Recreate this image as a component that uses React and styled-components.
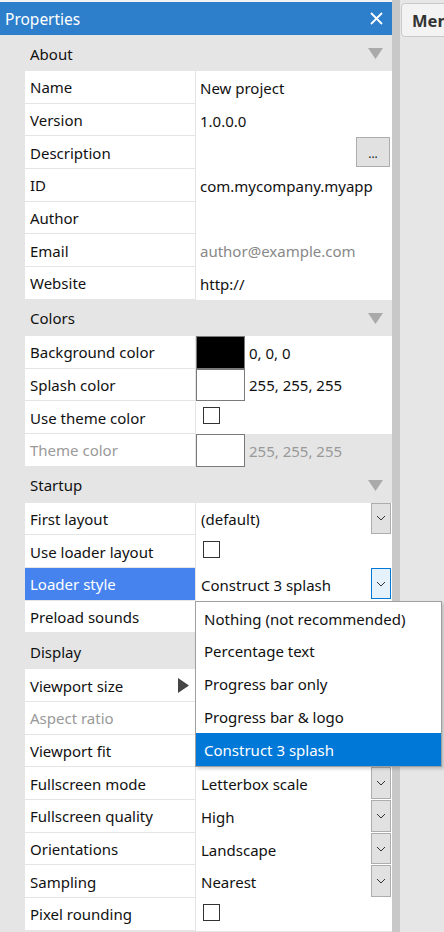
import React from "react";
import styled, { createGlobalStyle } from "styled-components";

const Global = createGlobalStyle`
  html, body { margin: 0; padding: 0; background: #e6e6e6; }
  body { font-family: "Noto Sans", "Open Sans", sans-serif; }
  * { box-sizing: border-box; }
`;

const Page = styled.div`
  display: flex;
  width: 444px;
  height: 932px;
  overflow: hidden;
  background: #e6e6e6;
`;

const Panel = styled.div`
  width: 392px;
  flex: none;
  display: flex;
  flex-direction: column;
  background: #e5e5e5;
  padding-top: 2px;
  position: relative;
`;

const TopStrip = styled.div`
  position: absolute;
  top: 0; left: 0; right: 0; height: 2px;
  background: #f3f3f3;
`;

const TitleBar = styled.div`
  height: 33px;
  background: #2d7fcc;
  color: #fff;
  display: flex;
  align-items: center;
  justify-content: space-between;
  padding: 0 9px 0 5px;
  font-size: 15.5px;
`;

const Track = styled.div`
  width: 8px;
  flex: none;
  background: #c8c8c8;
`;

const Right = styled.div`
  flex: 1;
  background: #e6e6e6;
  padding: 3px 0 0 1px;
  overflow: hidden;
`;

const Tab = styled.div`
  height: 34px;
  width: 80px;
  background: #f3f3f3;
  border: 1px solid #c9c9c9;
  border-radius: 4px 0 0 4px;
  display: flex;
  align-items: center;
  padding-left: 10px;
  font-weight: 700;
  font-size: 16.5px;
  color: #333;
  white-space: nowrap;
`;

const SectionHeader = styled.div`
  height: 36px;
  display: flex;
  align-items: center;
  justify-content: space-between;
  padding: 1px 9px 0 30px;
  font-size: 15px;
  color: #111;
`;

const Row = styled.div`
  position: relative;
  margin-left: 25px;
  height: 32.7px;
  display: grid;
  grid-template-columns: 171px 1fr;
  background: #fff;
  z-index: ${(p) => (p.$raised ? 5 : "auto")};
`;

const Label = styled.div`
  display: flex;
  align-items: center;
  padding: 1px 6px 0 5px;
  border-right: 1px solid #e5e5e5;
  border-bottom: 1px solid #e5e5e5;
  font-size: 15px;
  color: ${(p) => (p.$selected ? "#fff" : p.$disabled ? "#999" : "#111")};
  background: ${(p) => (p.$selected ? "#4683ee" : "#fff")};
  justify-content: space-between;
  white-space: nowrap;
`;

const Value = styled.div`
  display: flex;
  align-items: center;
  padding: 1px 0 0 4px;
  font-size: 15px;
  color: ${(p) => (p.$muted ? "#888" : "#111")};
  white-space: nowrap;
  min-width: 0;
`;

const DropValue = styled.div`
  display: flex;
  align-items: stretch;
  justify-content: space-between;
  padding-left: 5px;
  padding-right: 1px;
  font-size: 15px;
  color: #111;
  white-space: nowrap;
`;

const DropText = styled.span`
  display: flex;
  align-items: center;
  padding-top: 1px;
`;

const DropButton = styled.div`
  width: 20px;
  height: 31.5px;
  border: 1px solid ${(p) => (p.$active ? "#0078d7" : "#adadad")};
  background: ${(p) => (p.$active ? "#e5f1fb" : "#e1e1e1")};
  display: flex;
  align-items: center;
  justify-content: center;
`;

const EllipsisButton = styled.div`
  margin-left: auto;
  margin-right: 2px;
  width: 34px;
  height: 30px;
  border: 1px solid #adadad;
  background: #e1e1e1;
  display: flex;
  align-items: flex-end;
  justify-content: center;
  padding-bottom: 6px;
  font-size: 12px;
  line-height: 1;
  color: #222;
  align-self: flex-start;
`;

const ColorValue = styled.div`
  display: flex;
  align-items: stretch;
  font-size: 15px;
  color: ${(p) => (p.$disabled ? "#999" : "#111")};
  white-space: nowrap;
`;

const Swatch = styled.div`
  width: 49px;
  flex: none;
  background: ${(p) => p.$color};
  border: 1px solid #7a7a7a;
`;

const ColorText = styled.div`
  flex: 1;
  display: flex;
  align-items: center;
  padding: 1px 0 0 4px;
  background: ${(p) => (p.$disabled ? "#e5e5e5" : "transparent")};
`;

const CheckValue = styled.div`
  padding: 5.5px 0 0 7px;
`;

const Checkbox = styled.div`
  width: 17px;
  height: 17px;
  border: 1px solid #333;
  background: #fff;
`;

const Menu = styled.div`
  position: absolute;
  top: 100%;
  left: 170px;
  width: 247px;
  background: #fff;
  border: 1px solid #a0a0a0;
  box-shadow: 2px 2px 3px rgba(0, 0, 0, 0.18);
  z-index: 10;
`;

const MenuItem = styled.div`
  height: 32.8px;
  display: flex;
  align-items: center;
  padding: 1px 0 0 8px;
  font-size: 15px;
  white-space: nowrap;
  color: ${(p) => (p.$selected ? "#fff" : "#111")};
  background: ${(p) => (p.$selected ? "#0078d7" : "#fff")};
`;

const Chevron = () => (
  <svg width="10" height="6" viewBox="0 0 10 6">
    <path d="M1 1 L5 5 L9 1" fill="none" stroke="#333" strokeWidth="1" />
  </svg>
);

const HeaderArrow = () => (
  <svg width="15" height="11" viewBox="0 0 15 11">
    <path d="M0 0 H15 L7.5 11 Z" fill="#aaaaaa" />
  </svg>
);

const CloseIcon = () => (
  <svg width="13" height="13" viewBox="0 0 13 13">
    <path d="M1 1 L12 12 M12 1 L1 12" stroke="#fff" strokeWidth="1.8" />
  </svg>
);

const ExpandArrow = () => (
  <svg width="11" height="15" viewBox="0 0 11 15">
    <path d="M0 0 L11 7.5 L0 15 Z" fill="#444" />
  </svg>
);

const menuItems = [
  "Nothing (not recommended)",
  "Percentage text",
  "Progress bar only",
  "Progress bar & logo",
  "Construct 3 splash",
];

const sections = [
  {
    title: "About",
    rows: [
      { label: "Name", type: "text", value: "New project" },
      { label: "Version", type: "text", value: "1.0.0.0" },
      { label: "Description", type: "ellipsis" },
      { label: "ID", type: "text", value: "com.mycompany.myapp" },
      { label: "Author", type: "text", value: "" },
      { label: "Email", type: "text", value: "author@example.com", muted: true },
      { label: "Website", type: "text", value: "http://" },
    ],
  },
  {
    title: "Colors",
    rows: [
      { label: "Background color", type: "color", color: "#000", value: "0, 0, 0" },
      { label: "Splash color", type: "color", color: "#fff", value: "255, 255, 255" },
      { label: "Use theme color", type: "check" },
      { label: "Theme color", type: "color", color: "#fff", value: "255, 255, 255", disabled: true },
    ],
  },
  {
    title: "Startup",
    rows: [
      { label: "First layout", type: "drop", value: "(default)" },
      { label: "Use loader layout", type: "check" },
      { label: "Loader style", type: "drop", value: "Construct 3 splash", selected: true, menu: true },
      { label: "Preload sounds", type: "check" },
    ],
  },
  {
    title: "Display",
    rows: [
      { label: "Viewport size", type: "text", value: "", expand: true },
      { label: "Aspect ratio", type: "text", value: "", disabled: true },
      { label: "Viewport fit", type: "drop", value: "" },
      { label: "Fullscreen mode", type: "drop", value: "Letterbox scale" },
      { label: "Fullscreen quality", type: "drop", value: "High" },
      { label: "Orientations", type: "drop", value: "Landscape" },
      { label: "Sampling", type: "drop", value: "Nearest" },
      { label: "Pixel rounding", type: "check" },
    ],
  },
];

function renderValue(row) {
  switch (row.type) {
    case "ellipsis":
      return (
        <Value>
          <EllipsisButton>...</EllipsisButton>
        </Value>
      );
    case "color":
      return (
        <ColorValue $disabled={row.disabled}>
          <Swatch $color={row.color} />
          <ColorText $disabled={row.disabled}>{row.value}</ColorText>
        </ColorValue>
      );
    case "check":
      return (
        <CheckValue>
          <Checkbox />
        </CheckValue>
      );
    case "drop":
      return (
        <DropValue>
          <DropText>{row.value}</DropText>
          <DropButton $active={row.selected}>
            <Chevron />
          </DropButton>
        </DropValue>
      );
    default:
      return <Value $muted={row.muted}>{row.value}</Value>;
  }
}

export default function App() {
  return (
    <>
      <Global />
      <Page>
        <Panel>
          <TopStrip />
          <TitleBar>
            <span>Properties</span>
            <CloseIcon />
          </TitleBar>
          {sections.map((s) => (
            <React.Fragment key={s.title}>
              <SectionHeader>
                <span>{s.title}</span>
                <HeaderArrow />
              </SectionHeader>
              {s.rows.map((r) => (
                <Row key={r.label} $raised={r.menu}>
                  <Label $selected={r.selected} $disabled={r.disabled}>
                    <span>{r.label}</span>
                    {r.expand && <ExpandArrow />}
                  </Label>
                  {renderValue(r)}
                  {r.menu && (
                    <Menu>
                      {menuItems.map((m) => (
                        <MenuItem key={m} $selected={m === r.value}>
                          {m}
                        </MenuItem>
                      ))}
                    </Menu>
                  )}
                </Row>
              ))}
            </React.Fragment>
          ))}
        </Panel>
        <Track />
        <Right>
          <Tab>Menu</Tab>
        </Right>
      </Page>
    </>
  );
}
